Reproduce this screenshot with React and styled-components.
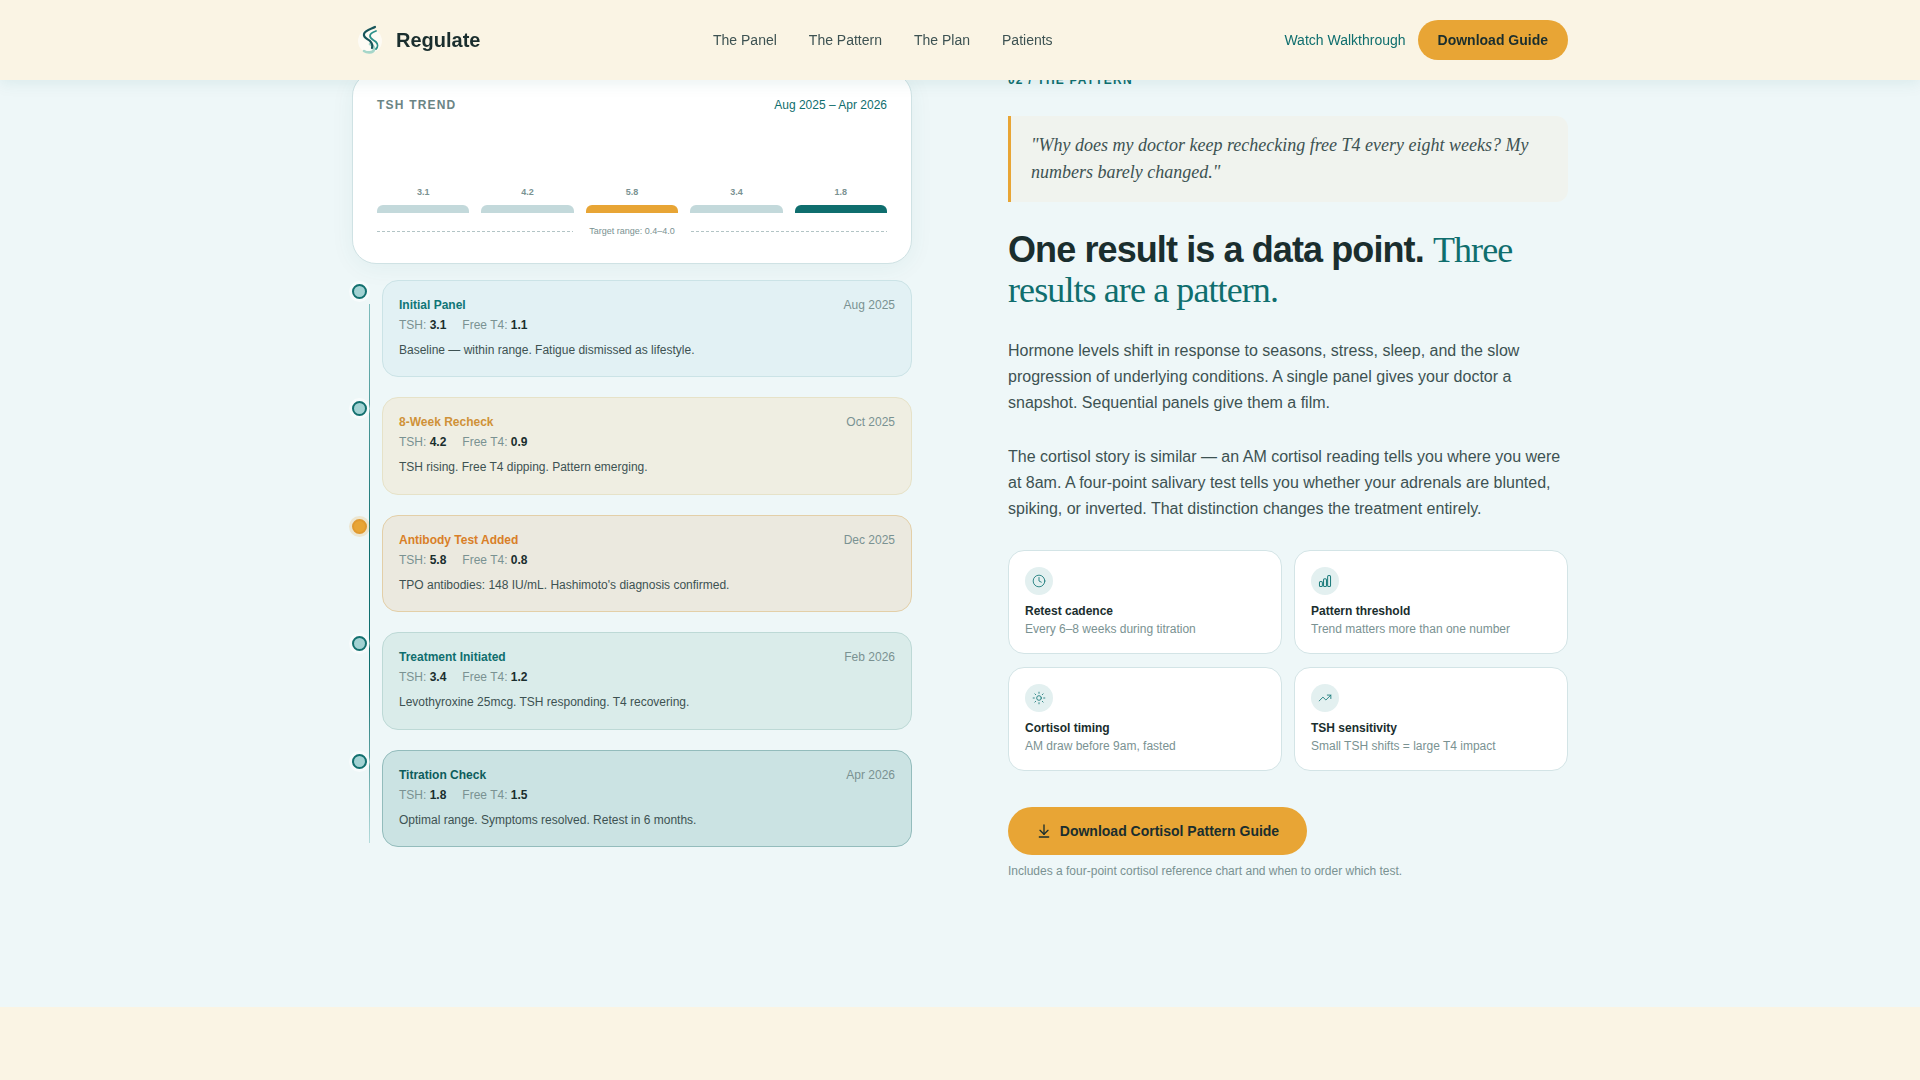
import React from "react";
import styled, { createGlobalStyle } from "styled-components";
import { Clock, Sun, TrendingUp, ArrowDownToLine } from "lucide-react";

const Global = createGlobalStyle`
  html, body { margin: 0; padding: 0; }
  body { font-family: "Liberation Sans", Arial, sans-serif; background: #faf4e4; color: #1a2e2e; overflow: hidden; }
  * { box-sizing: border-box; }
`;

const Page = styled.div`
  height: 1080px;
  background: #faf4e4;
`;

const Nav = styled.header`
  position: fixed;
  inset: 0 0 auto 0;
  height: 80px;
  background: #faf4e4;
  box-shadow: 0 2px 16px rgba(15, 110, 110, 0.1);
  z-index: 10;
`;

const NavInner = styled.div`
  width: 1280px;
  height: 100%;
  margin: 0 auto;
  padding: 0 32px;
  display: grid;
  grid-template-columns: 361px 1fr auto;
  align-items: center;
`;

const Brand = styled.a`
  display: flex;
  align-items: center;
  gap: 8px;
  font-size: 20px;
  font-weight: 700;
  color: #1a2e2e;
`;

const NavLinks = styled.nav`
  display: flex;
  gap: 32px;
`;

const NavLink = styled.a`
  font-size: 14px;
  line-height: 20px;
  color: #3d5252;
`;

const NavActions = styled.div`
  display: flex;
  align-items: center;
  gap: 12px;
`;

const GhostLink = styled.a`
  font-size: 14px;
  color: #0f6e6e;
`;

const NavButton = styled.a`
  height: 40px;
  padding: 0 20px;
  display: flex;
  align-items: center;
  border-radius: 999px;
  background: #e8a535;
  font-size: 14px;
  font-weight: 700;
  color: #1a2e2e;
`;

const Section = styled.section`
  height: 1007px;
  padding: 72px 0 0;
  background: #eef7f8;
`;

const Columns = styled.div`
  width: 1280px;
  margin: 0 auto;
  padding: 0 32px;
  display: grid;
  grid-template-columns: 560px 560px;
  column-gap: 96px;
  align-items: start;
`;

const ChartCard = styled.div`
  height: 191.7px;
  padding: 24px;
  background: #fff;
  border: 1px solid #cfe2e4;
  border-radius: 24px;
  box-shadow: 0 4px 24px rgba(15, 110, 110, 0.06);
`;

const ChartHead = styled.div`
  display: flex;
  justify-content: space-between;
  align-items: center;
  line-height: 16px;
`;

const ChartTitle = styled.span`
  font-size: 12px;
  font-weight: 700;
  letter-spacing: 1.2px;
  color: #6b8585;
`;

const ChartRange = styled.span`
  font-size: 12px;
  color: #0f6e6e;
`;

const Bars = styled.div`
  height: 84px;
  margin-top: 16px;
  display: flex;
  gap: 12px;
  align-items: flex-end;
`;

const BarCol = styled.div`
  flex: 1;
  display: flex;
  flex-direction: column;
  align-items: center;
`;

const BarValue = styled.span`
  font-size: 9px;
  font-weight: 700;
  line-height: 12px;
  margin-bottom: 7px;
  color: #7a9292;
`;

const Bar = styled.div`
  width: 100%;
  height: 8px;
  border-radius: 6px 6px 0 0;
  background: ${(p) => p.$color};
`;

const TargetRow = styled.div`
  margin-top: 12px;
  display: flex;
  align-items: center;
  gap: 16px;
`;

const TargetLine = styled.span`
  flex: 1;
  height: 1px;
  background: repeating-linear-gradient(to right, #b2c4c5 0 3px, transparent 3px 5px);
`;

const TargetLabel = styled.span`
  font-size: 9px;
  line-height: 12px;
  color: #7a9292;
`;

const Timeline = styled.div`
  position: relative;
  margin-top: 16px;
  padding-left: 30px;
  display: flex;
  flex-direction: column;
  gap: 20px;
`;

const Rail = styled.div`
  position: absolute;
  left: 17px;
  top: 24px;
  bottom: 4px;
  width: 1px;
  background: linear-gradient(to bottom, #7fbdbd, #0f6e6e 45%, #0f6e6e 70%, #b5dcdc);
`;

const Item = styled.article`
  position: relative;
  padding: 16px;
  border: 1px solid ${(p) => p.$border};
  border-radius: 16px;
  background: ${(p) => p.$bg};
`;

const Dot = styled.span`
  position: absolute;
  left: -31.5px;
  top: 3px;
  width: 15px;
  height: 15px;
  border-radius: 50%;
  border: 2.5px solid ${(p) => (p.$warm ? "#e09a30" : "#13706f")};
  background: ${(p) => (p.$warm ? "#e8a535" : "#a2d2d3")};
  box-shadow: 0 0 0 3px ${(p) => (p.$warm ? "rgba(232,165,53,.2)" : "rgba(255,255,255,.55)")};
`;

const ItemHead = styled.div`
  display: flex;
  justify-content: space-between;
  line-height: 16px;
`;

const ItemTitle = styled.span`
  font-size: 12px;
  font-weight: 700;
  color: ${(p) => p.$color};
`;

const ItemDate = styled.span`
  font-size: 12px;
  color: #7a9292;
`;

const Meta = styled.div`
  margin-top: 4px;
  display: flex;
  gap: 16px;
  font-size: 12px;
  line-height: 16px;
  color: #7a9292;
  b { color: #1a2e2e; }
`;

const Note = styled.p`
  margin: 8px 0 0;
  font-size: 12px;
  line-height: 19.5px;
  color: #3d5252;
`;

const Eyebrow = styled.div`
  font-size: 12px;
  font-weight: 700;
  line-height: 16px;
  letter-spacing: 1.2px;
  color: #0f6e6e;
  margin-bottom: 28px;
`;

const Quote = styled.blockquote`
  margin: 0 0 28px;
  padding: 16px 20px;
  border-left: 3px solid #e8a535;
  border-radius: 0 12px 12px 0;
  background: #f0f3ee;
  font-family: "Liberation Serif", "Times New Roman", serif;
  font-style: italic;
  font-size: 18px;
  line-height: 27px;
  color: #3d5252;
`;

const Heading = styled.h2`
  margin: 0 0 27.6px;
  font-size: 36px;
  line-height: 39px;
  font-weight: 700;
  letter-spacing: -0.9px;
  color: #1a2e2e;
`;

const HeadingAccent = styled.span`
  font-family: "Liberation Serif", "Times New Roman", serif;
  font-weight: 400;
  color: #0f6e6e;
`;

const Body = styled.p`
  margin: 0 0 28px;
  font-size: 16px;
  line-height: 26px;
  color: #3d5252;
`;

const Features = styled.div`
  display: grid;
  grid-template-columns: 1fr 1fr;
  column-gap: 12px;
  row-gap: 12.4px;
`;

const Feature = styled.div`
  height: 104.6px;
  padding: 16px;
  background: #fff;
  border: 1px solid #d3e4e6;
  border-radius: 16px;
`;

const FeatureIcon = styled.span`
  width: 28px;
  height: 28px;
  margin-bottom: 8px;
  display: flex;
  align-items: center;
  justify-content: center;
  border-radius: 50%;
  background: #e3f0f0;
  color: #1a7a7a;
`;

const FeatureTitle = styled.div`
  font-size: 12px;
  font-weight: 700;
  line-height: 16px;
  color: #1a2e2e;
`;

const FeatureText = styled.div`
  margin-top: 2px;
  font-size: 12px;
  line-height: 16px;
  color: #7a9292;
`;

const CTA = styled.a`
  margin-top: 35.6px;
  width: 299px;
  height: 48px;
  display: flex;
  align-items: center;
  justify-content: center;
  gap: 8px;
  border-radius: 999px;
  background: #e8a535;
  font-size: 14px;
  font-weight: 700;
  color: #1a2e2e;
`;

const Caption = styled.p`
  margin: 8px 0 0;
  font-size: 12px;
  line-height: 16px;
  color: #7a9292;
`;

const Logo = () => (
  <svg width="36" height="36" viewBox="0 0 36 36" fill="none" aria-hidden="true">
    <circle cx="18" cy="19" r="12" fill="#fff" opacity="0.6" />
    <path d="M12 29c3 2 9 2 10-1s-2-5-4-6" stroke="#a6d6c9" strokeWidth="2.6" strokeLinecap="round" />
    <path d="M24 9c-3 1-6 2-6 5s4 4 6 6 2 5 0 7" stroke="#2b8f88" strokeWidth="1.8" strokeLinecap="round" />
    <path d="M23 5c-4 2-10 3-11 7s4 5 6 7 3 4 2 7" stroke="#17555a" strokeWidth="2.2" strokeLinecap="round" />
  </svg>
);

const PatternIcon = () => (
  <svg width="14" height="14" viewBox="0 0 24 24" fill="none" stroke="currentColor" strokeWidth="1.75" aria-hidden="true">
    <rect x="2.5" y="13" width="5" height="8.5" rx="2" />
    <rect x="9.5" y="8" width="5" height="13.5" rx="2" />
    <rect x="16.5" y="2.5" width="5" height="19" rx="2" />
  </svg>
);

const bars = [
  { v: "3.1", c: "#c3d9db" },
  { v: "4.2", c: "#c3d9db" },
  { v: "5.8", c: "#e8a535" },
  { v: "3.4", c: "#c3d9db" },
  { v: "1.8", c: "#0f6e6e" },
];

const items = [
  { t: "Initial Panel", d: "Aug 2025", tsh: "3.1", t4: "1.1", n: "Baseline — within range. Fatigue dismissed as lifestyle.", bg: "#e2f1f4", b: "#cbe3e6", c: "#0f7676" },
  { t: "8-Week Recheck", d: "Oct 2025", tsh: "4.2", t4: "0.9", n: "TSH rising. Free T4 dipping. Pattern emerging.", bg: "#efeee2", b: "#e6e2c8", c: "#cf9238" },
  { t: "Antibody Test Added", d: "Dec 2025", tsh: "5.8", t4: "0.8", n: "TPO antibodies: 148 IU/mL. Hashimoto's diagnosis confirmed.", bg: "#ebe9df", b: "#e3cfa8", c: "#d97f28", warm: true },
  { t: "Treatment Initiated", d: "Feb 2026", tsh: "3.4", t4: "1.2", n: "Levothyroxine 25mcg. TSH responding. T4 recovering.", bg: "#daecea", b: "#bdd9d6", c: "#0f6e6e" },
  { t: "Titration Check", d: "Apr 2026", tsh: "1.8", t4: "1.5", n: "Optimal range. Symptoms resolved. Retest in 6 months.", bg: "#cbe3e3", b: "#93bcbc", c: "#0d5c5c" },
];

const features = [
  { icon: <Clock size={14} strokeWidth={1.5} />, t: "Retest cadence", d: "Every 6–8 weeks during titration" },
  { icon: <PatternIcon />, t: "Pattern threshold", d: "Trend matters more than one number" },
  { icon: <Sun size={14} strokeWidth={1.5} />, t: "Cortisol timing", d: "AM draw before 9am, fasted" },
  { icon: <TrendingUp size={14} strokeWidth={1.5} />, t: "TSH sensitivity", d: "Small TSH shifts = large T4 impact" },
];

export default function App() {
  return (
    <Page>
      <Global />
      <Nav>
        <NavInner>
          <Brand><Logo />Regulate</Brand>
          <NavLinks>
            <NavLink>The Panel</NavLink>
            <NavLink>The Pattern</NavLink>
            <NavLink>The Plan</NavLink>
            <NavLink>Patients</NavLink>
          </NavLinks>
          <NavActions>
            <GhostLink>Watch Walkthrough</GhostLink>
            <NavButton>Download Guide</NavButton>
          </NavActions>
        </NavInner>
      </Nav>
      <Section>
        <Columns>
          <div>
            <ChartCard>
              <ChartHead>
                <ChartTitle>TSH TREND</ChartTitle>
                <ChartRange>Aug 2025 – Apr 2026</ChartRange>
              </ChartHead>
              <Bars>
                {bars.map((b) => (
                  <BarCol key={b.v}>
                    <BarValue>{b.v}</BarValue>
                    <Bar $color={b.c} />
                  </BarCol>
                ))}
              </Bars>
              <TargetRow>
                <TargetLine />
                <TargetLabel>Target range: 0.4–4.0</TargetLabel>
                <TargetLine />
              </TargetRow>
            </ChartCard>
            <Timeline>
              <Rail />
              {items.map((it) => (
                <Item key={it.t} $bg={it.bg} $border={it.b}>
                  <Dot $warm={it.warm} />
                  <ItemHead>
                    <ItemTitle $color={it.c}>{it.t}</ItemTitle>
                    <ItemDate>{it.d}</ItemDate>
                  </ItemHead>
                  <Meta>
                    <span>TSH: <b>{it.tsh}</b></span>
                    <span>Free T4: <b>{it.t4}</b></span>
                  </Meta>
                  <Note>{it.n}</Note>
                </Item>
              ))}
            </Timeline>
          </div>
          <div>
            <Eyebrow>02 / THE PATTERN</Eyebrow>
            <Quote>"Why does my doctor keep rechecking free T4 every eight weeks? My numbers barely changed."</Quote>
            <Heading>One result is a data point. <HeadingAccent>Three results are a pattern.</HeadingAccent></Heading>
            <Body>Hormone levels shift in response to seasons, stress, sleep, and the slow progression of underlying conditions. A single panel gives your doctor a snapshot. Sequential panels give them a film.</Body>
            <Body>The cortisol story is similar — an AM cortisol reading tells you where you were at 8am. A four-point salivary test tells you whether your adrenals are blunted, spiking, or inverted. That distinction changes the treatment entirely.</Body>
            <Features>
              {features.map(({ icon, t, d }) => (
                <Feature key={t}>
                  <FeatureIcon>{icon}</FeatureIcon>
                  <FeatureTitle>{t}</FeatureTitle>
                  <FeatureText>{d}</FeatureText>
                </Feature>
              ))}
            </Features>
            <CTA><ArrowDownToLine size={16} strokeWidth={2} />Download Cortisol Pattern Guide</CTA>
            <Caption>Includes a four-point cortisol reference chart and when to order which test.</Caption>
          </div>
        </Columns>
      </Section>
    </Page>
  );
}
